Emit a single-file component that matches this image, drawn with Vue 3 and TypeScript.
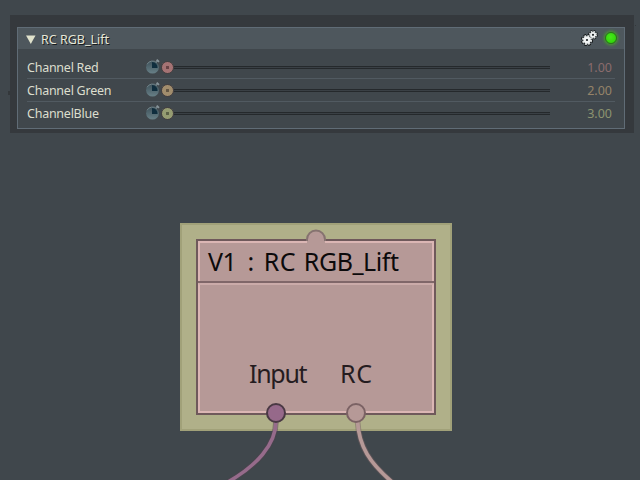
<script setup lang="ts">
interface Channel {
  label: string
  value: string
  tone: string
}

const channels: Channel[] = [
  { label: 'Channel Red', value: '1.00', tone: 'red' },
  { label: 'Channel Green', value: '2.00', tone: 'tan' },
  { label: 'ChannelBlue', value: '3.00', tone: 'olive' },
]
</script>

<template>
  <main class="workspace">
    <section class="shadow">
      <div class="panel">
        <header class="panel-head">
          <svg class="caret" width="10" height="9" viewBox="0 0 10 9"><path d="M0 .5h9.5L4.8 9z" fill="#e0e2cc" /></svg>
          <span class="panel-title">RC RGB_Lift</span>
          <svg class="gears" width="18" height="16" viewBox="0 0 18 16">
            <g fill="none" stroke="#151819">
              <circle cx="6" cy="10" r="4.8" stroke-width="2.6" stroke-dasharray="2.4 1.37" />
              <circle cx="12" cy="4.8" r="3.6" stroke-width="2.4" stroke-dasharray="1.8 1.03" />
            </g>
            <circle cx="12" cy="4.8" r="3.5" fill="#202526" />
            <circle cx="12" cy="4.8" r="3" fill="none" stroke="#d8dddd" stroke-width="2" stroke-dasharray="1.4 .956" />
            <circle cx="12" cy="4.8" r="2" fill="none" stroke="#eef1f1" stroke-width="1.8" />
            <circle cx="6" cy="10" r="4.6" fill="#202526" />
            <circle cx="6" cy="10" r="4" fill="none" stroke="#d8dddd" stroke-width="2.2" stroke-dasharray="1.8 1.34" />
            <circle cx="6" cy="10" r="2.4" fill="none" stroke="#f0f3f3" stroke-width="2.6" />
          </svg>
          <span class="lamp"></span>
        </header>
        <div class="rows">
          <div v-for="c in channels" :key="c.label" class="row">
            <span class="label">{{ c.label }}</span>
            <svg class="clock" width="16" height="18" viewBox="0 0 16 18">
              <defs>
                <linearGradient id="dial" x1="0" y1="0" x2="0" y2="1">
                  <stop offset="0" stop-color="#3d5059" />
                  <stop offset="1" stop-color="#688087" />
                </linearGradient>
              </defs>
              <path d="M11.4 3.8l1-1" stroke="#819097" stroke-width="1.5" />
              <path d="M11.7 1.6l2.3 2.3" stroke="#87949a" stroke-width="1.8" />
              <circle cx="7.5" cy="9.2" r="6.4" fill="url(#dial)" />
              <path d="M2 6.3a6.3 6.3 0 0 1 9.8-1.6" fill="none" stroke="#718389" />
              <path d="M7 4v6h5.6a5.6 5.6 0 0 0-5.6-6z" fill="#102e3e" />
            </svg>
            <span class="track"><i :class="['knob', c.tone]"></i><i class="groove"></i></span>
            <span :class="['value', c.tone + '-text']">{{ c.value }}</span>
          </div>
        </div>
      </div>
    </section>

    <section class="node">
      <div class="card">
        <div class="card-head">
          <span class="node-title">V1 <span class="colon">:</span> <span class="kind">RC</span> RGB_Lift</span>
        </div>
        <div class="card-body">
          <span class="port input">Input</span>
          <span class="port rc">RC</span>
        </div>
      </div>
    </section>

    <svg class="wires" width="640" height="480" viewBox="0 0 640 480">
      <path d="M307 243v-3a9 9 0 0 1 18 0v3z" fill="#b69997" />
      <path d="M307 241v-1.5a9 9 0 0 1 18 0v1.5" fill="none" stroke="#867270" stroke-width="2" />
      <path d="M276 421C276 445 256 466 228 482" fill="none" stroke="#50434e" stroke-opacity=".5" stroke-width="5.6" />
      <path d="M276 421C276 445 256 466 228 482" fill="none" stroke="#966b8b" stroke-width="3.6" />
      <path d="M357.5 421C359 447 370 463 392 482" fill="none" stroke="#765f62" stroke-opacity=".5" stroke-width="5.6" />
      <path d="M357.5 421C359 447 370 463 392 482" fill="none" stroke="#b69997" stroke-width="3.8" />
      <circle cx="276" cy="413" r="9" fill="#96698a" stroke="#4a3944" stroke-width="2" />
      <circle cx="356" cy="413" r="9" fill="#b69997" stroke="#7b6264" stroke-width="2" />
    </svg>
    <i class="speck left"></i>
    <i class="speck right"></i>
  </main>
</template>

<style>
body { margin: 0; background: #40474c; overflow: hidden; }
</style>

<style scoped>
.workspace {
  position: relative;
  box-sizing: border-box;
  width: 640px;
  height: 480px;
  padding: 15px 6px 0 10px;
  overflow: hidden;
  background: #40474c;
  font-family: "Noto Sans", "DejaVu Sans Condensed", sans-serif;
}
.shadow {
  box-sizing: border-box;
  height: 118px;
  padding: 12px 9px 4px 7px;
  background: #35393d;
}
.panel {
  box-sizing: border-box;
  height: 102px;
  border: 1px solid #606c76;
  background: #40474c;
}
.panel-head {
  display: flex;
  align-items: center;
  height: 21px;
  padding: 0 5px 0 8px;
  background: #4e575d;
}
.caret { flex: none; margin-top: 2px; }
.panel-title {
  margin-left: 5px;
  flex: 1;
  color: #e5e6d8;
  font-size: 12.5px;
  line-height: 21px;
  letter-spacing: 0;
  text-shadow: 1px 1px 0 #171b1e;
  padding-top: 2px;
}
.gears { flex: none; margin-right: 6px; margin-top: -1px; }
.lamp {
  box-sizing: border-box;
  width: 12px;
  height: 12px;
  margin-right: 2px;
  margin-top: -1px;
  border: 1px solid #267d12;
  border-radius: 50%;
  background: radial-gradient(circle at 45% 40%, #46ea18, #2ccc08);
  box-shadow: 0 0 3px 1px #49a32c;
}
.rows { padding: 7px 9px 0; }
.row {
  box-sizing: border-box;
  display: flex;
  align-items: center;
  height: 23px;
  border-bottom: 1px solid #515a61;
}
.row:last-child { border-bottom-color: transparent; }
.label {
  width: 118px;
  color: #dcdece;
  font-size: 12.5px;
  line-height: 20px;
  padding-top: 2px;
  letter-spacing: -.25px;
  white-space: nowrap;
}
.clock { flex: none; margin-top: -1px; }
.track { display: flex; align-items: center; width: 389px; padding-top: 1px; }
.knob {
  box-sizing: border-box;
  flex: none;
  width: 13px;
  height: 13px;
  border: 1px solid #453f40;
  border-radius: 50%;
}
.knob.red { background: radial-gradient(circle, #684345 0 1.4px, #a57374 1.8px); }
.knob.tan { background: radial-gradient(circle, #635644 0 1.4px, #a18d6d 1.8px); }
.knob.olive { background: radial-gradient(circle, #5b6046 0 1.4px, #969c72 1.8px); }
.groove {
  box-sizing: border-box;
  flex: 1;
  height: 3px;
  border-top: 1px solid #25292c;
  border-bottom: 1px solid #25292c;
  background: #3a4045;
}
.value {
  flex: 1;
  margin-right: 3px;
  padding-top: 2px;
  text-align: right;
  font-size: 12.5px;
  line-height: 20px;
  letter-spacing: 0;
}
.red-text { color: #8b6c6d; }
.tan-text { color: #958369; }
.olive-text { color: #8c936f; }

.node {
  position: absolute;
  left: 180px;
  top: 223px;
  box-sizing: border-box;
  width: 272px;
  height: 208px;
  padding: 14px;
  border: 2px solid #a1a179;
  background: #b0b089;
}
.card {
  box-sizing: border-box;
  height: 176px;
  border: 2px solid #6f595b;
  background: #b69997;
}
.card-head {
  box-sizing: border-box;
  height: 42px;
  padding: 1px 0 0 10px;
  border-bottom: 2px solid #806769;
  box-shadow: inset 2px 2px #dbb6b4, inset -2px 0 #dbb6b4;
}
.card-body {
  box-sizing: border-box;
  display: flex;
  height: 130px;
  padding: 71px 0 0 49px;
  border: 2px solid #dbb6b4;
  border-top-color: #cbaba9;
}
.node-title {
  display: block;
  color: #0c0a0b;
  font-size: 25px;
  line-height: 38px;
  letter-spacing: -.45px;
  white-space: nowrap;
}
.colon { margin: 0 4px 0 5px; }
.kind { margin-right: 2px; letter-spacing: .3px; }
.port { color: #251c1f; font-size: 25px; line-height: 34px; }
.input { width: 91px; letter-spacing: -1.3px; }
.rc { letter-spacing: .8px; }
.wires { position: absolute; left: 0; top: 0; }
.speck { position: absolute; background: #34383b; }
.left { left: 8px; top: 91px; width: 2px; height: 4px; }
.right { left: 635px; top: 25px; width: 1px; height: 1px; }
</style>
